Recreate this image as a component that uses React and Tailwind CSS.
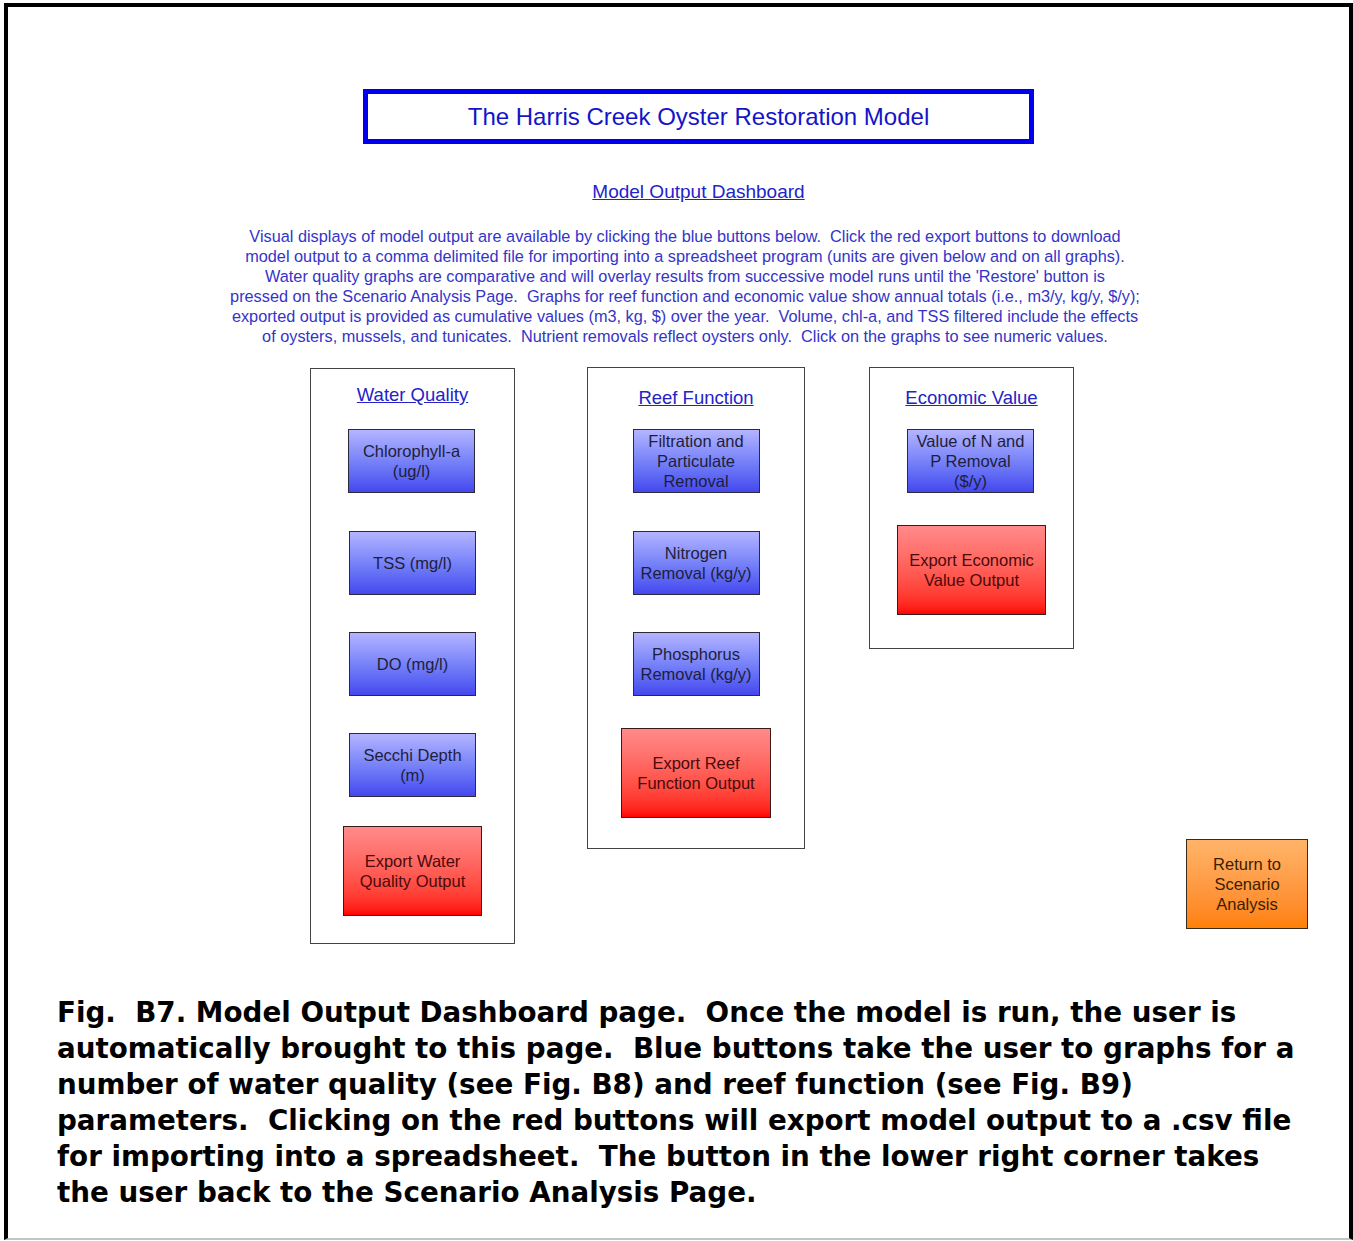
import React from "react";

const blueBtn =
  "flex items-center justify-center text-center border border-[#2a2a3a] bg-gradient-to-b from-[#b4b4ff] to-[#4646ee] text-[#1e1e3c] text-[16.5px] leading-[20px] w-[127px] h-[64px]";
const redBtn =
  "flex items-center justify-center text-center border border-[#3a1a1a] bg-gradient-to-b from-[#ff8a8a] to-[#ff0000] text-[#4a0a0a] text-[16.5px] leading-[20px] h-[90px]";
const heading = "text-[18.5px] leading-[22px] underline text-[#2323c8]";

function Blue({ children, className = "" }) {
  return <div className={`${blueBtn} ${className}`}>{children}</div>;
}

function Red({ children, className = "" }) {
  return <div className={`${redBtn} ${className}`}>{children}</div>;
}

export default function App() {
  const intro = [
    "Visual displays of model output are available by clicking the blue buttons below.  Click the red export buttons to download",
    "model output to a comma delimited file for importing into a spreadsheet program (units are given below and on all graphs).",
    "Water quality graphs are comparative and will overlay results from successive model runs until the 'Restore' button is",
    "pressed on the Scenario Analysis Page.  Graphs for reef function and economic value show annual totals (i.e., m3/y, kg/y, $/y);",
    "exported output is provided as cumulative values (m3, kg, $) over the year.  Volume, chl-a, and TSS filtered include the effects",
    "of oysters, mussels, and tunicates.  Nutrient removals reflect oysters only.  Click on the graphs to see numeric values.",
  ];

  const caption = [
    "Fig.  B7. Model Output Dashboard page.  Once the model is run, the user is",
    "automatically brought to this page.  Blue buttons take the user to graphs for a",
    "number of water quality (see Fig. B8) and reef function (see Fig. B9)",
    "parameters.  Clicking on the red buttons will export model output to a .csv file",
    "for importing into a spreadsheet.  The button in the lower right corner takes",
    "the user back to the Scenario Analysis Page.",
  ];

  return (
    <div className="w-[1353px] h-[1241px] bg-white pt-[3px] pl-[4px] overflow-hidden font-['Liberation_Sans',Arial,sans-serif]">
      <div className="w-[1349px] h-[1237px] border-t-[4px] border-l-[4px] border-r-[4px] border-black border-b-[2px] border-b-[#c4c4c4] flex flex-col">
        {/* title */}
        <div className="ml-[355px] mt-[82px] w-[671px] h-[55px] border-[5px] border-[#0000ee] flex items-center justify-center text-[24px] text-[#1414c8]">
          The Harris Creek Oyster Restoration Model
        </div>

        <div className="ml-[355px] mt-[37px] w-[671px] text-center">
          <span className="text-[19px] leading-[22px] underline text-[#2323c8]">Model Output Dashboard</span>
        </div>

        <div className="ml-[214px] mt-[21px] w-[926px] text-center text-[#3434c8] text-[16.3px] leading-[20px] whitespace-pre">
          {intro.map((l, i) => (
            <div key={i}>{l}</div>
          ))}
        </div>

        {/* columns */}
        <div className="flex items-start ml-[302px] mt-[21px]">
          <div className="w-[205px] h-[576px] mt-[1px] border border-[#444] flex flex-col items-center pt-[15px]">
            <span className={heading}>Water Quality</span>
            <Blue className="mt-[23px] -translate-x-[1px]">Chlorophyll-a<br />(ug/l)</Blue>
            <Blue className="mt-[38px]">TSS (mg/l)</Blue>
            <Blue className="mt-[37px]">DO (mg/l)</Blue>
            <Blue className="mt-[37px]">Secchi Depth<br />(m)</Blue>
            <Red className="mt-[29px] w-[139px]">Export Water<br />Quality Output</Red>
          </div>

          <div className="ml-[72px] w-[218px] h-[482px] border border-[#444] flex flex-col items-center pt-[19px]">
            <span className={heading}>Reef Function</span>
            <Blue className="mt-[20px]">Filtration and<br />Particulate<br />Removal</Blue>
            <Blue className="mt-[38px]">Nitrogen<br />Removal (kg/y)</Blue>
            <Blue className="mt-[37px]">Phosphorus<br />Removal (kg/y)</Blue>
            <Red className="mt-[32px] w-[150px]">Export Reef<br />Function Output</Red>
          </div>

          <div className="ml-[64px] w-[205px] h-[282px] border border-[#444] flex flex-col items-center pt-[19px]">
            <span className={heading}>Economic Value</span>
            <Blue className="mt-[20px] -translate-x-[1px]">Value of N and<br />P Removal<br />($/y)</Blue>
            <Red className="mt-[32px] w-[149px]">Export Economic<br />Value Output</Red>
          </div>

          <div className="ml-[112px] mt-[472px] w-[122px] h-[90px] border border-[#3a2a1a] bg-gradient-to-b from-[#ffb468] to-[#ff8000] flex items-center justify-center text-center text-[16.5px] leading-[20px] text-[#3a1e00]">
            Return to<br />Scenario<br />Analysis
          </div>
        </div>

        {/* caption */}
        <div className="ml-[49px] mt-[51px] text-[27.75px] leading-[36px] font-bold text-black whitespace-pre font-['DejaVu_Sans',sans-serif]">
          {caption.map((l, i) => (
            <div key={i}>{l}</div>
          ))}
        </div>
      </div>
    </div>
  );
}
